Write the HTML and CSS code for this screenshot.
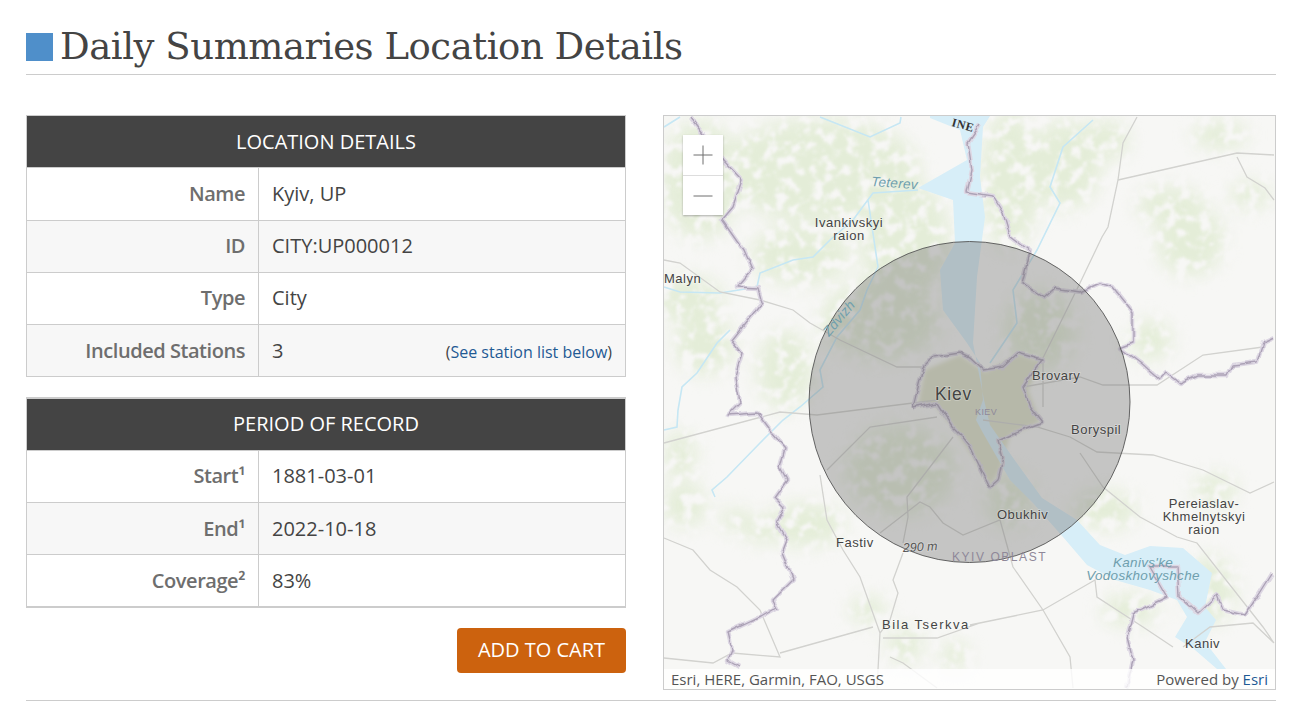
FILE: index.html
```html
<!DOCTYPE html>
<html lang="en">
<head>
<meta charset="utf-8">
<title>Daily Summaries Location Details</title>
<link rel="stylesheet" href="styles.css">
</head>
<body>
<main class="page">
  <header class="page-head">
    <span class="page-mark"></span>
    <h1 class="page-title">Daily Summaries Location Details</h1>
  </header>
  <section class="content">
    <div class="details">
      <table class="info">
        <colgroup><col class="col-label"><col></colgroup>
        <thead><tr><th colspan="2" class="info-head">LOCATION DETAILS</th></tr></thead>
        <tbody>
          <tr class="row-tall"><th class="info-label">Name</th><td class="info-value">Kyiv, UP</td></tr>
          <tr class="row-up"><th class="info-label">ID</th><td class="info-value">CITY:UP000012</td></tr>
          <tr class="row-up"><th class="info-label">Type</th><td class="info-value">City</td></tr>
          <tr><th class="info-label">Included Stations</th><td class="info-value"><div class="split"><span>3</span><span class="note">(<a href="#stations" class="link">See station list below</a>)</span></div></td></tr>
        </tbody>
      </table>
      <table class="info info-second">
        <colgroup><col class="col-label"><col></colgroup>
        <thead><tr><th colspan="2" class="info-head">PERIOD OF RECORD</th></tr></thead>
        <tbody>
          <tr class="row-up"><th class="info-label">Start¹</th><td class="info-value">1881-03-01</td></tr>
          <tr><th class="info-label">End¹</th><td class="info-value">2022-10-18</td></tr>
          <tr class="row-down"><th class="info-label">Coverage²</th><td class="info-value">83%</td></tr>
        </tbody>
      </table>
      <div class="actions"><button class="cart" type="button">ADD TO CART</button></div>
    </div>
    <div class="map">
      <svg class="map-svg" viewBox="664 116 611 573" width="611" height="573" xmlns="http://www.w3.org/2000/svg">
        <defs>
          <filter id="mottle" x="-5%" y="-5%" width="110%" height="110%" color-interpolation-filters="sRGB">
            <feGaussianBlur in="SourceGraphic" stdDeviation="9" result="b"/>
            <feTurbulence type="fractalNoise" baseFrequency="0.085" numOctaves="3" seed="4"/>
            <feColorMatrix values="0 0 0 0 0 0 0 0 0 0 0 0 0 0 0 5 0 0 0 -1.6" result="na"/>
            <feComposite in="b" in2="na" operator="in"/>
            <feGaussianBlur stdDeviation="0.9"/>
          </filter>
          <filter id="wobble" x="-5%" y="-5%" width="110%" height="110%">
            <feTurbulence type="fractalNoise" baseFrequency="0.07" numOctaves="2" seed="9" result="n"/>
            <feDisplacementMap in="SourceGraphic" in2="n" scale="6" xChannelSelector="R" yChannelSelector="G"/>
          </filter>
          <filter id="soft"><feGaussianBlur stdDeviation="0.5"/></filter>
          <filter id="cityblur"><feGaussianBlur stdDeviation="2"/></filter>
          <g id="borders">
            <path d="M690 117L723 160 742 180 733 207 722 220 743 250 752 270 737 287 758 288 762 303 748 320 732 340 742 353 735 377 740 403 728 415 757 413 772 433 785 448 780 467 787 480 775 497 785 507 777 523 787 540 782 553 793 580 773 600 777 607 760 617 728 632 732 650 728 660 740 667"/>
            <path d="M980 125L968 143 972 170 967 193 993 197 1003 213 1010 237 1030 252 1022 283 1045 297 1055 288 1080 292 1100 283 1112 287 1133 313 1133 343 1120 348 1140 363 1160 380 1167 373 1180 383 1197 375 1227 375 1232 365 1257 362 1263 343 1274 338"/>
            <path d="M913 408L923 367 933 357 960 353 970 358 983 370 1003 367 1018 353 1042 360 1023 387 1030 407 1042 422 1013 433 998 440 1003 458 998 480 990 487 980 467 970 447 962 437 953 428 937 403 913 408"/>
            <path d="M1272 573L1257 597 1245 615 1223 610 1217 595 1198 613 1180 597 1178 567 1150 567 1167 597 1133 613 1127 637 1133 660 1127 688"/>
          </g>
        </defs>
        <rect class="m-land" x="664" y="116" width="611" height="573"/>
        <g class="m-green" filter="url(#mottle)">
          <ellipse cx="700" cy="180" rx="40" ry="60"/>
          <ellipse cx="820" cy="170" rx="100" ry="52"/>
          <ellipse cx="905" cy="240" rx="45" ry="60"/>
          <ellipse cx="800" cy="255" rx="50" ry="30"/>
          <ellipse cx="880" cy="320" rx="60" ry="40"/>
          <ellipse cx="690" cy="300" rx="34" ry="24"/>
          <ellipse cx="705" cy="345" rx="30" ry="30"/>
          <ellipse cx="785" cy="370" rx="28" ry="40"/>
          <ellipse cx="680" cy="455" rx="16" ry="24"/>
          <ellipse cx="685" cy="505" rx="22" ry="22"/>
          <ellipse cx="735" cy="520" rx="14" ry="12"/>
          <ellipse cx="805" cy="525" rx="40" ry="22"/>
          <ellipse cx="760" cy="530" rx="14" ry="14"/>
          <ellipse cx="868" cy="610" rx="18" ry="14"/>
          <ellipse cx="905" cy="645" rx="18" ry="18"/>
          <ellipse cx="955" cy="655" rx="14" ry="14"/>
          <ellipse cx="1010" cy="180" rx="30" ry="70"/>
          <ellipse cx="1065" cy="165" rx="36" ry="45"/>
          <ellipse cx="1105" cy="140" rx="24" ry="20"/>
          <ellipse cx="1170" cy="205" rx="34" ry="18"/>
          <ellipse cx="1190" cy="240" rx="34" ry="36"/>
          <ellipse cx="1220" cy="135" rx="28" ry="14"/>
          <ellipse cx="1250" cy="195" rx="20" ry="14"/>
          <ellipse cx="1150" cy="340" rx="22" ry="20"/>
          <ellipse cx="1040" cy="330" rx="36" ry="40"/>
          <ellipse cx="900" cy="470" rx="55" ry="45"/>
          <ellipse cx="1010" cy="500" rx="24" ry="28"/>
          <ellipse cx="1105" cy="510" rx="32" ry="20"/>
          <ellipse cx="1215" cy="490" rx="22" ry="16"/>
          <ellipse cx="1210" cy="590" rx="26" ry="34"/>
          <ellipse cx="1130" cy="610" rx="28" ry="16"/>
        </g>
        <path class="m-city" filter="url(#cityblur)" d="M918 405L925 370 960 355 985 372 1018 355 1042 362 1028 390 1040 422 1010 435 1000 470 990 485 975 460 955 430 935 405Z"/>
        <g filter="url(#soft)">
          <path class="m-water" d="M930 118L960 130 967 160 918 188 953 200 955 243 940 270 943 310 967 343 980 363 983 400 976 420 983 433 1010 480 1033 503 1063 537 1087 565 1115 580 1150 590 1177 600 1187 617 1175 637 1195 650 1217 669 1226 669 1205 642 1216 620 1205 607 1212 573 1183 548 1150 546 1125 555 1100 545 1077 520 1042 498 1016 462 990 425 984 400 973 343 977 277 985 217 980 177 983 127 990 116 930 116Z"/>
          <path class="m-river" d="M664 127L680 117M820 117L870 137 900 123 901 117M664 287L680 292 720 293 757 287 760 273 793 260 813 257 830 240 853 220 873 193 918 190M868 200L878 267 867 290 860 310 837 337 820 370 823 387 800 407 783 420 760 443 727 477 712 490 715 497M730 330L717 343 697 373 682 387 678 410 677 427 664 430M1093 120L1063 147 1050 187 1060 203 1037 250 1013 290 1017 323 990 363"/>
          <path class="m-road" d="M664 260L680 263 720 292 760 300 793 310 810 323 840 340 897 367 923 367M664 443L780 412 817 415 937 400M1137 117L1123 143 1118 180 1108 227 1102 237 1080 283 1043 358 1043 407M1118 180L1237 153 1274 155M1237 157L1247 177 1265 188 1274 200M1023 387L1080 377 1103 385 1157 385 1203 355 1263 347M983 420L1037 427 1070 437 1097 452 1153 455 1203 470 1250 493 1274 482M1080 453L1103 487 1140 517 1177 537 1197 543 1263 627 1274 643M1013 567L1043 610 1070 657 1073 688M970 625L1043 610 1095 580 1097 597 1143 627 1173 647M1183 647L1210 627 1253 623 1274 643M664 538L693 550 710 570 737 587 760 610 780 657 732 653 713 663 664 658M780 653L873 627M820 475L827 520 843 550 860 577 880 633M903 553L893 580 898 593 890 620 880 633 877 688M890 657L903 663 937 688M883 638L937 638 980 623M827 470L870 427 937 417M953 437L907 497 908 517 903 543M880 533L920 502 930 507 943 523 963 535 1000 520 1013 567"/>
          <g class="m-border-wide" filter="url(#wobble)"><use href="#borders"/></g>
          <g class="m-border-thin" filter="url(#wobble)"><use href="#borders"/></g>
        </g>
        <circle class="m-circle" cx="969.5" cy="402" r="160.5"/>
        <text class="m-label" x="849" y="227" text-anchor="middle">Ivankivskyi</text>
        <text class="m-label" x="849" y="240" text-anchor="middle">raion</text>
        <text class="m-label" x="664" y="283">Malyn</text>
        <text class="m-label m-big" x="935" y="400">Kiev</text>
        <text class="m-label" x="1032" y="380">Brovary</text>
        <text class="m-label" x="1071" y="434">Boryspil</text>
        <text class="m-label" x="997" y="519">Obukhiv</text>
        <text class="m-label" x="836" y="547">Fastiv</text>
        <text class="m-label m-wide" x="882" y="629">Bila Tserkva</text>
        <text class="m-label" x="1204" y="508" text-anchor="middle">Pereiaslav-</text>
        <text class="m-label" x="1204" y="521" text-anchor="middle">Khmelnytskyi</text>
        <text class="m-label" x="1204" y="534" text-anchor="middle">raion</text>
        <text class="m-label" x="1185" y="648">Kaniv</text>
        <text class="m-label m-dist" x="903" y="552" transform="rotate(-3 903 552)">290 m</text>
        <text class="m-admin" x="952" y="561">KYIV OBLAST</text>
        <text class="m-admin m-small" x="975" y="415">KIEV</text>
        <text class="m-hydro" x="871" y="186" transform="rotate(4 871 186)">Teterev</text>
        <text class="m-hydro" x="829" y="337" transform="rotate(-50 829 337)">Zdvizh</text>
        <text class="m-hydro" x="1143" y="567" text-anchor="middle">Kanivs'ke</text>
        <text class="m-hydro" x="1143" y="580" text-anchor="middle">Vodoskhovyshche</text>
        <text class="m-country" x="951" y="126" transform="rotate(15 951 126)">INE</text>
      </svg>
      <div class="zoom">
        <button class="zoom-btn" type="button" aria-label="Zoom in"><svg width="20" height="20" viewBox="0 0 20 20"><path class="zoom-icon" d="M0.5 10H19.5M10 0.5V19.5"/></svg></button>
        <button class="zoom-btn" type="button" aria-label="Zoom out"><svg width="20" height="20" viewBox="0 0 20 20"><path class="zoom-icon" d="M0.5 10H19.5"/></svg></button>
      </div>
      <div class="attribution"><span>Esri, HERE, Garmin, FAO, USGS</span><span>Powered by <a href="#esri" class="link">Esri</a></span></div>
    </div>
  </section>
  <div class="page-foot"></div>
</main>
</body>
</html>
```

FILE: styles.css
```css
* { box-sizing: border-box; }
html, body { margin: 0; background: #fff; }
body { font-family: "Open Sans", "Liberation Sans", sans-serif; color: #444; overflow: hidden; }
.page { width: 1309px; height: 722px; padding: 21px 33px 0 26px; }
.page-head { display: flex; align-items: center; gap: 7px; height: 54px; padding-bottom: 3px; border-bottom: 1px solid #ccc; }
.page-mark { width: 27px; height: 28px; background: #4f8fca; margin-top: 2px; }
.page-title { margin: 2px 0 0; font-family: "DejaVu Serif", serif; font-weight: 400; font-size: 37px; line-height: 50px; color: #444; letter-spacing: -.45px; white-space: nowrap; }
.content { display: grid; grid-template-columns: 600px 613px; gap: 37px; margin-top: 40px; }
.info { width: 100%; table-layout: fixed; border-collapse: collapse; border: 1px solid #ccc; }
.col-label { width: 232px; }
.info-second { margin-top: 20px; border-top-width: 2px; border-bottom-width: 2px; }
.info-head { height: 52px; padding: 0; background: #444; color: #fff; font-size: 20px; font-weight: 400; text-align: center; }
.info-second .info-head { padding-bottom: 2px; }
.info-label { height: 52px; padding: 0 13px 0 0; border: 1px solid #ccc; text-align: right; font-size: 20px; font-weight: 600; color: #6e6e6e; letter-spacing: -.45px; }
.info-value { height: 52px; padding: 0 13px; border: 1px solid #ccc; font-size: 20px; color: #444; }
.row-tall > * { height: 53px; padding-bottom: 1px; }
.row-up > * { padding-bottom: 2px; }
.row-down > * { height: 53px; padding-top: 1px; }
.info tbody tr:nth-child(even) { background: #f7f7f7; }
.split { display: flex; justify-content: space-between; align-items: baseline; }
.note { font-size: 16px; }
.link { color: #1f5a94; text-decoration: none; }
.actions { display: flex; justify-content: flex-end; margin-top: 20px; }
.cart { width: 169px; height: 45px; padding: 0 0 2px; border: 0; border-radius: 4px; background: #cc620e; color: #fff; font: 400 20px "Open Sans", sans-serif; }
.map { position: relative; height: 575px; border: 1px solid #ccc; overflow: hidden; }
.map-svg { display: block; }
.zoom { position: absolute; left: 19px; top: 19px; width: 40px; background: #fff; box-shadow: 0 1px 2px rgba(0,0,0,.3); }
.zoom-btn { display: flex; align-items: center; justify-content: center; width: 40px; height: 40px; padding: 0; border: 0; background: #fff; }
.zoom-btn + .zoom-btn { border-top: 1px solid #ddd; }
.zoom-icon { fill: none; stroke: #6e6e6e; stroke-width: 1; }
.attribution { position: absolute; left: 0; right: 0; bottom: 0; display: flex; justify-content: space-between; height: 20px; padding: 0 7px; background: rgba(255,255,255,.8); font-size: 15px; line-height: 20px; color: #555; }
.page-foot { margin-top: 10px; height: 1px; background: #ccc; box-shadow: 50px 10px 14px 0 rgba(0,0,0,.06); }

.m-land { fill: #f7f7f5; }
.m-green { fill: #e4edd8; }
.m-city { fill: #e0e3cb; }
.m-water { fill: #d7eef8; }
.m-river { fill: none; stroke: #c6e7f4; stroke-width: 1.6; }
.m-road { fill: none; stroke: #d2d2cf; stroke-width: 1.3; }
.m-border-wide { fill: none; stroke: #ddd7e3; stroke-width: 4.5; stroke-linejoin: round; }
.m-border-thin { fill: none; stroke: #aca2b6; stroke-width: 1.4; stroke-linejoin: round; }
.m-circle { fill: rgba(110,110,110,.37); stroke: #555; stroke-width: .9; }
.m-label { font: 13px "Liberation Sans", sans-serif; letter-spacing: .5px; fill: #444; paint-order: stroke; stroke: rgba(255,255,255,.3); stroke-width: 1.5px; }
.m-big { font-size: 17.5px; letter-spacing: .7px; }
.m-wide { letter-spacing: 1.5px; }
.m-dist { font-size: 12.5px; font-style: italic; fill: #555; letter-spacing: 0; }
.m-admin { font: 12px "Liberation Sans", sans-serif; letter-spacing: 1.55px; fill: #8f8899; }
.m-small { font-size: 9px; letter-spacing: .4px; }
.m-hydro { font: italic 13.5px "Liberation Sans", sans-serif; letter-spacing: .3px; fill: #6f9fae; }
.m-country { font: 700 12px "Liberation Serif", serif; fill: #333; letter-spacing: .5px; }
```
